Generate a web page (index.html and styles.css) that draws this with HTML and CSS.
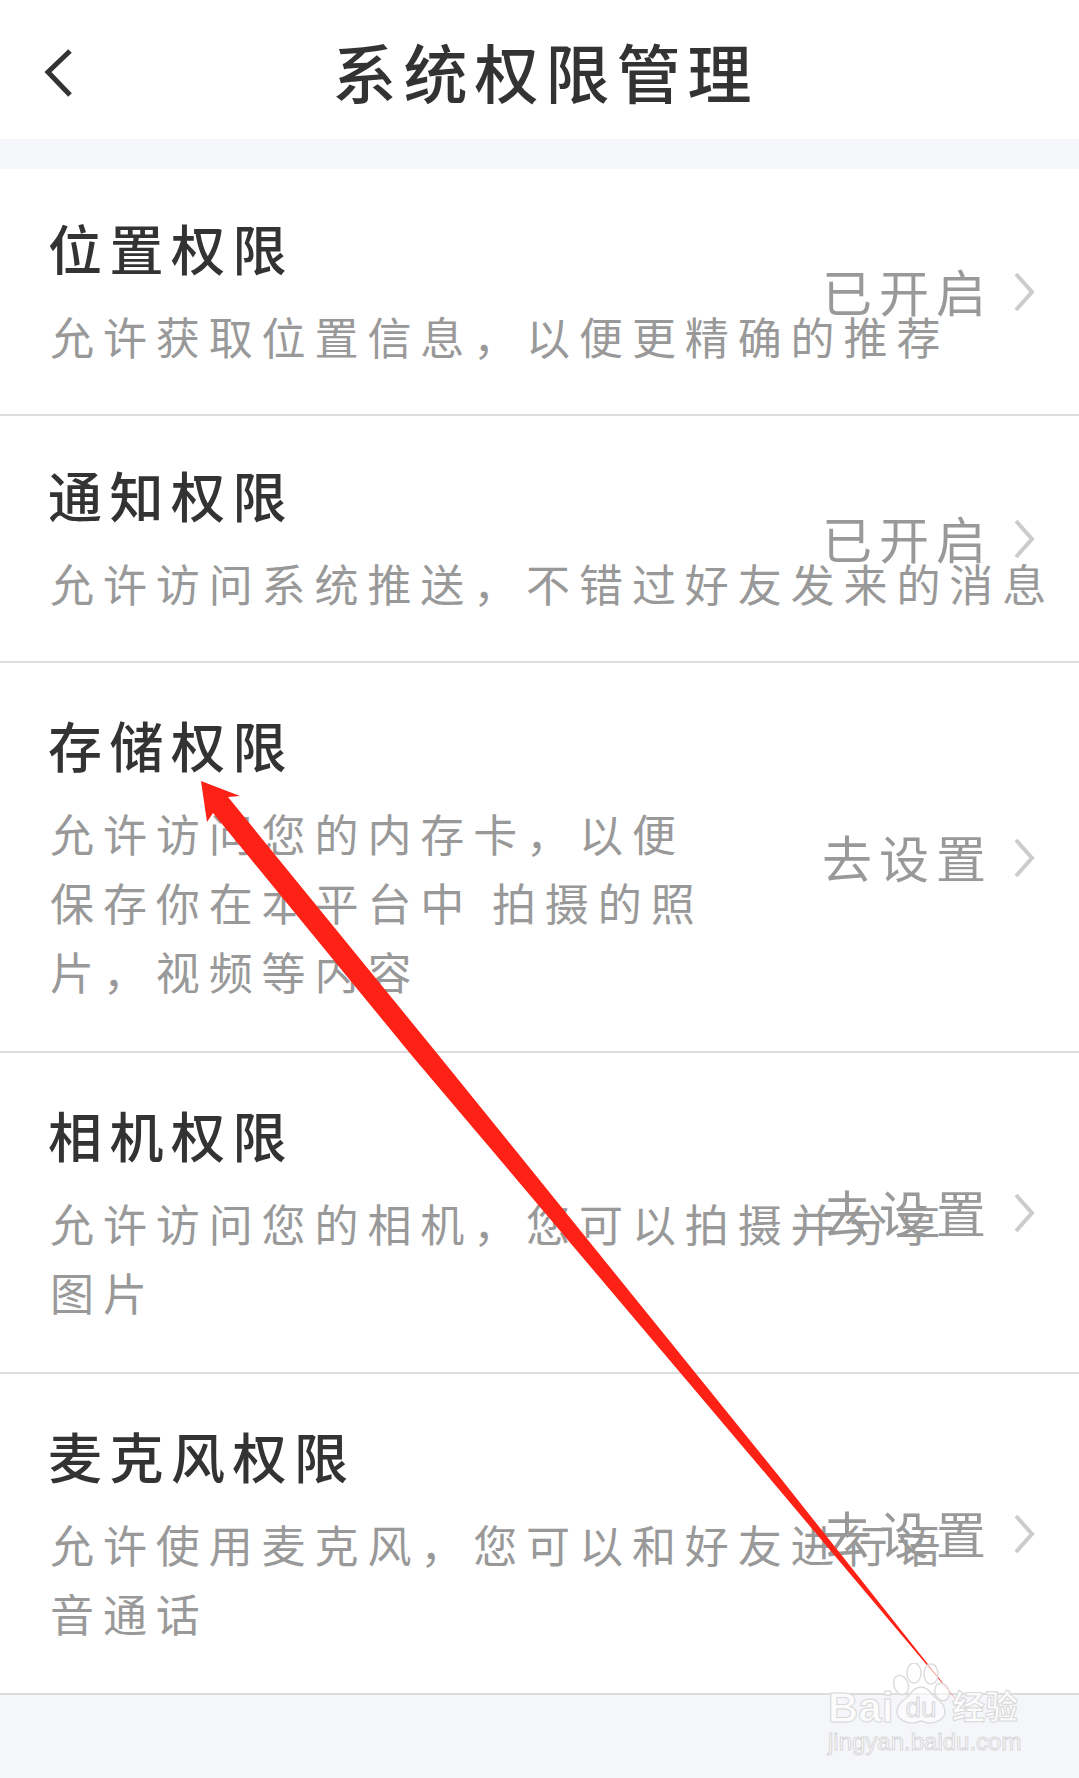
FILE: index.html
```html
<!DOCTYPE html>
<html lang="zh-CN">

<head>
    <meta charset="UTF-8">
    <meta name="viewport" content="width=device-width, initial-scale=1.0">
    <title>系统权限管理</title>
    <link rel="stylesheet" href="styles.css">
</head>

<body>
    <div class="page">
        <header class="topbar">
            <svg class="back" width="32" height="50" viewBox="0 0 32 50">
                <path d="M28 3 L6 24 L28 47" fill="none" stroke="#333" stroke-width="5" />
            </svg>
            <h1>系统权限管理</h1>
        </header>

        <div class="list">
            <div class="item">
                <div class="text">
                    <h2>位置权限</h2>
                    <p>允许获取位置信息，以便更精确的推荐</p>
                </div>
                <div class="status">已开启
                    <svg class="arrow" width="22" height="40" viewBox="0 0 22 40"><path d="M3 2 L19 20 L3 38" fill="none" stroke="#ccc" stroke-width="4" /></svg>
                </div>
            </div>
            <div class="item">
                <div class="text">
                    <h2>通知权限</h2>
                    <p>允许访问系统推送，不错过好友发来的消息</p>
                </div>
                <div class="status">已开启
                    <svg class="arrow" width="22" height="40" viewBox="0 0 22 40"><path d="M3 2 L19 20 L3 38" fill="none" stroke="#ccc" stroke-width="4" /></svg>
                </div>
            </div>
            <div class="item multi">
                <div class="text">
                    <h2>存储权限</h2>
                    <p>允许访问您的内存卡，以便<br>保存你在本平台中 拍摄的照<br>片，视频等内容</p>
                </div>
                <div class="status">去设置
                    <svg class="arrow" width="22" height="40" viewBox="0 0 22 40"><path d="M3 2 L19 20 L3 38" fill="none" stroke="#ccc" stroke-width="4" /></svg>
                </div>
            </div>
            <div class="item multi">
                <div class="text">
                    <h2>相机权限</h2>
                    <p>允许访问您的相机，您可以拍摄并分享<br>图片</p>
                </div>
                <div class="status">去设置
                    <svg class="arrow" width="22" height="40" viewBox="0 0 22 40"><path d="M3 2 L19 20 L3 38" fill="none" stroke="#ccc" stroke-width="4" /></svg>
                </div>
            </div>
            <div class="item multi">
                <div class="text">
                    <h2>麦克风权限</h2>
                    <p>允许使用麦克风，您可以和好友进行语<br>音通话</p>
                </div>
                <div class="status">去设置
                    <svg class="arrow" width="22" height="40" viewBox="0 0 22 40"><path d="M3 2 L19 20 L3 38" fill="none" stroke="#ccc" stroke-width="4" /></svg>
                </div>
            </div>
        </div>

        <!-- red annotation arrow -->
        <svg class="annotation" width="1079" height="1778" viewBox="0 0 1079 1778">
            <polygon points="201,781 240,796 228,797 440,1057 782,1480 958,1702 771,1480 413,1057 213,813 207,822" fill="#fe2116" />
        </svg>

        <!-- watermark -->
        <div class="watermark">
            <svg class="paw" width="60" height="64" viewBox="0 0 60 64">
                <ellipse cx="8" cy="22" rx="7" ry="10" transform="rotate(-20 8 22)" />
                <ellipse cx="21" cy="10" rx="7" ry="10" />
                <ellipse cx="38" cy="11" rx="7" ry="10" />
                <ellipse cx="49" cy="29" rx="7" ry="9" transform="rotate(-20 49 29)" />
                <path d="M28 24 C20 24 18 32 12 36 C6 40 4 44 4 49 C4 56 12 60 20 60 C24 60 26 58 28 58 C30 58 32 60 36 60 C44 60 52 56 52 49 C52 44 50 40 44 36 C38 32 36 24 28 24 Z" />
            </svg>
            <div class="wm-logo">
                <span class="wm-bai">Bai</span>
                <span class="wm-du">du</span>
                <span class="wm-cn">经验</span>
            </div>
            <div class="wm-url">jingyan.baidu.com</div>
        </div>
    </div>
</body>
</html>
```

FILE: styles.css
```css
* {
    box-sizing: border-box;
}

body {
    margin: 0;
    background: #f5f6fa;
    font-family: "Noto Sans CJK SC", "Noto Sans", sans-serif;
}

.page {
    position: relative;
    width: 1079px;
    height: 1778px;
    overflow: hidden;
}

.topbar {
    display: flex;
    align-items: center;
    justify-content: center;
    position: relative;
    height: 139px;
    background: #fff;
}

.back {
    position: absolute;
    left: 42px;
    top: 48px;
}

.topbar h1 {
    margin: 0;
    padding-left: 12px;
    font-size: 64px;
    line-height: 78px;
    font-weight: 500;
    letter-spacing: 7px;
    color: #333;
}

.list {
    margin-top: 30px;
    background: #fff;
}

.item {
    display: flex;
    align-items: center;
    justify-content: space-between;
    padding: 45px 44px 43px 48px;
    border-bottom: 2px solid #ddd;
}

.item.multi {
    padding-top: 48px;
    padding-bottom: 45px;
}

.text {
    width: 0;
    flex: 1;
    white-space: nowrap;
}

.text h2 {
    margin: 0 0 20px;
    font-size: 54px;
    line-height: 68px;
    font-weight: 500;
    letter-spacing: 7.5px;
    color: #333;
}

.text p {
    margin: 0 0 0 2px;
    font-size: 44px;
    line-height: 69px;
    letter-spacing: 8.9px;
    color: #999;
}

.status {
    display: flex;
    align-items: center;
    gap: 20px;
    padding-bottom: 6px;
    font-size: 50px;
    letter-spacing: 7px;
    color: #999;
}

.arrow {
    margin-top: 4px;
}

.annotation {
    position: absolute;
    left: 0;
    top: 0;
}

.watermark {
    position: absolute;
    left: 828px;
    top: 1662px;
    width: 210px;
}

.paw {
    position: absolute;
    left: 65px;
    top: 1px;
}

.paw ellipse,
.paw path {
    fill: rgba(255, 255, 255, 0.6);
    stroke: #ddd;
    stroke-width: 1.5;
}

.wm-logo {
    display: flex;
    position: relative;
    margin-top: 24px;
    font-family: "Liberation Sans", "Noto Sans CJK SC", sans-serif;
    line-height: 44px;
    white-space: nowrap;
    color: #fcfcfd;
    -webkit-text-stroke: 1px #d8d8d8;
}

.wm-bai {
    width: 69px;
    font-size: 42px;
    font-weight: 700;
}

.wm-du {
    width: 55px;
    padding-right: 7px;
    font-size: 28px;
    text-align: center;
    color: #f5f6fa;
}

.wm-cn {
    font-size: 33px;
    font-weight: 700;
}

.wm-url {
    position: relative;
    font-family: "Liberation Sans", sans-serif;
    font-size: 24px;
    line-height: 24px;
    white-space: nowrap;
    color: #fcfcfd;
    -webkit-text-stroke: 1px #d8d8d8;
}
```
